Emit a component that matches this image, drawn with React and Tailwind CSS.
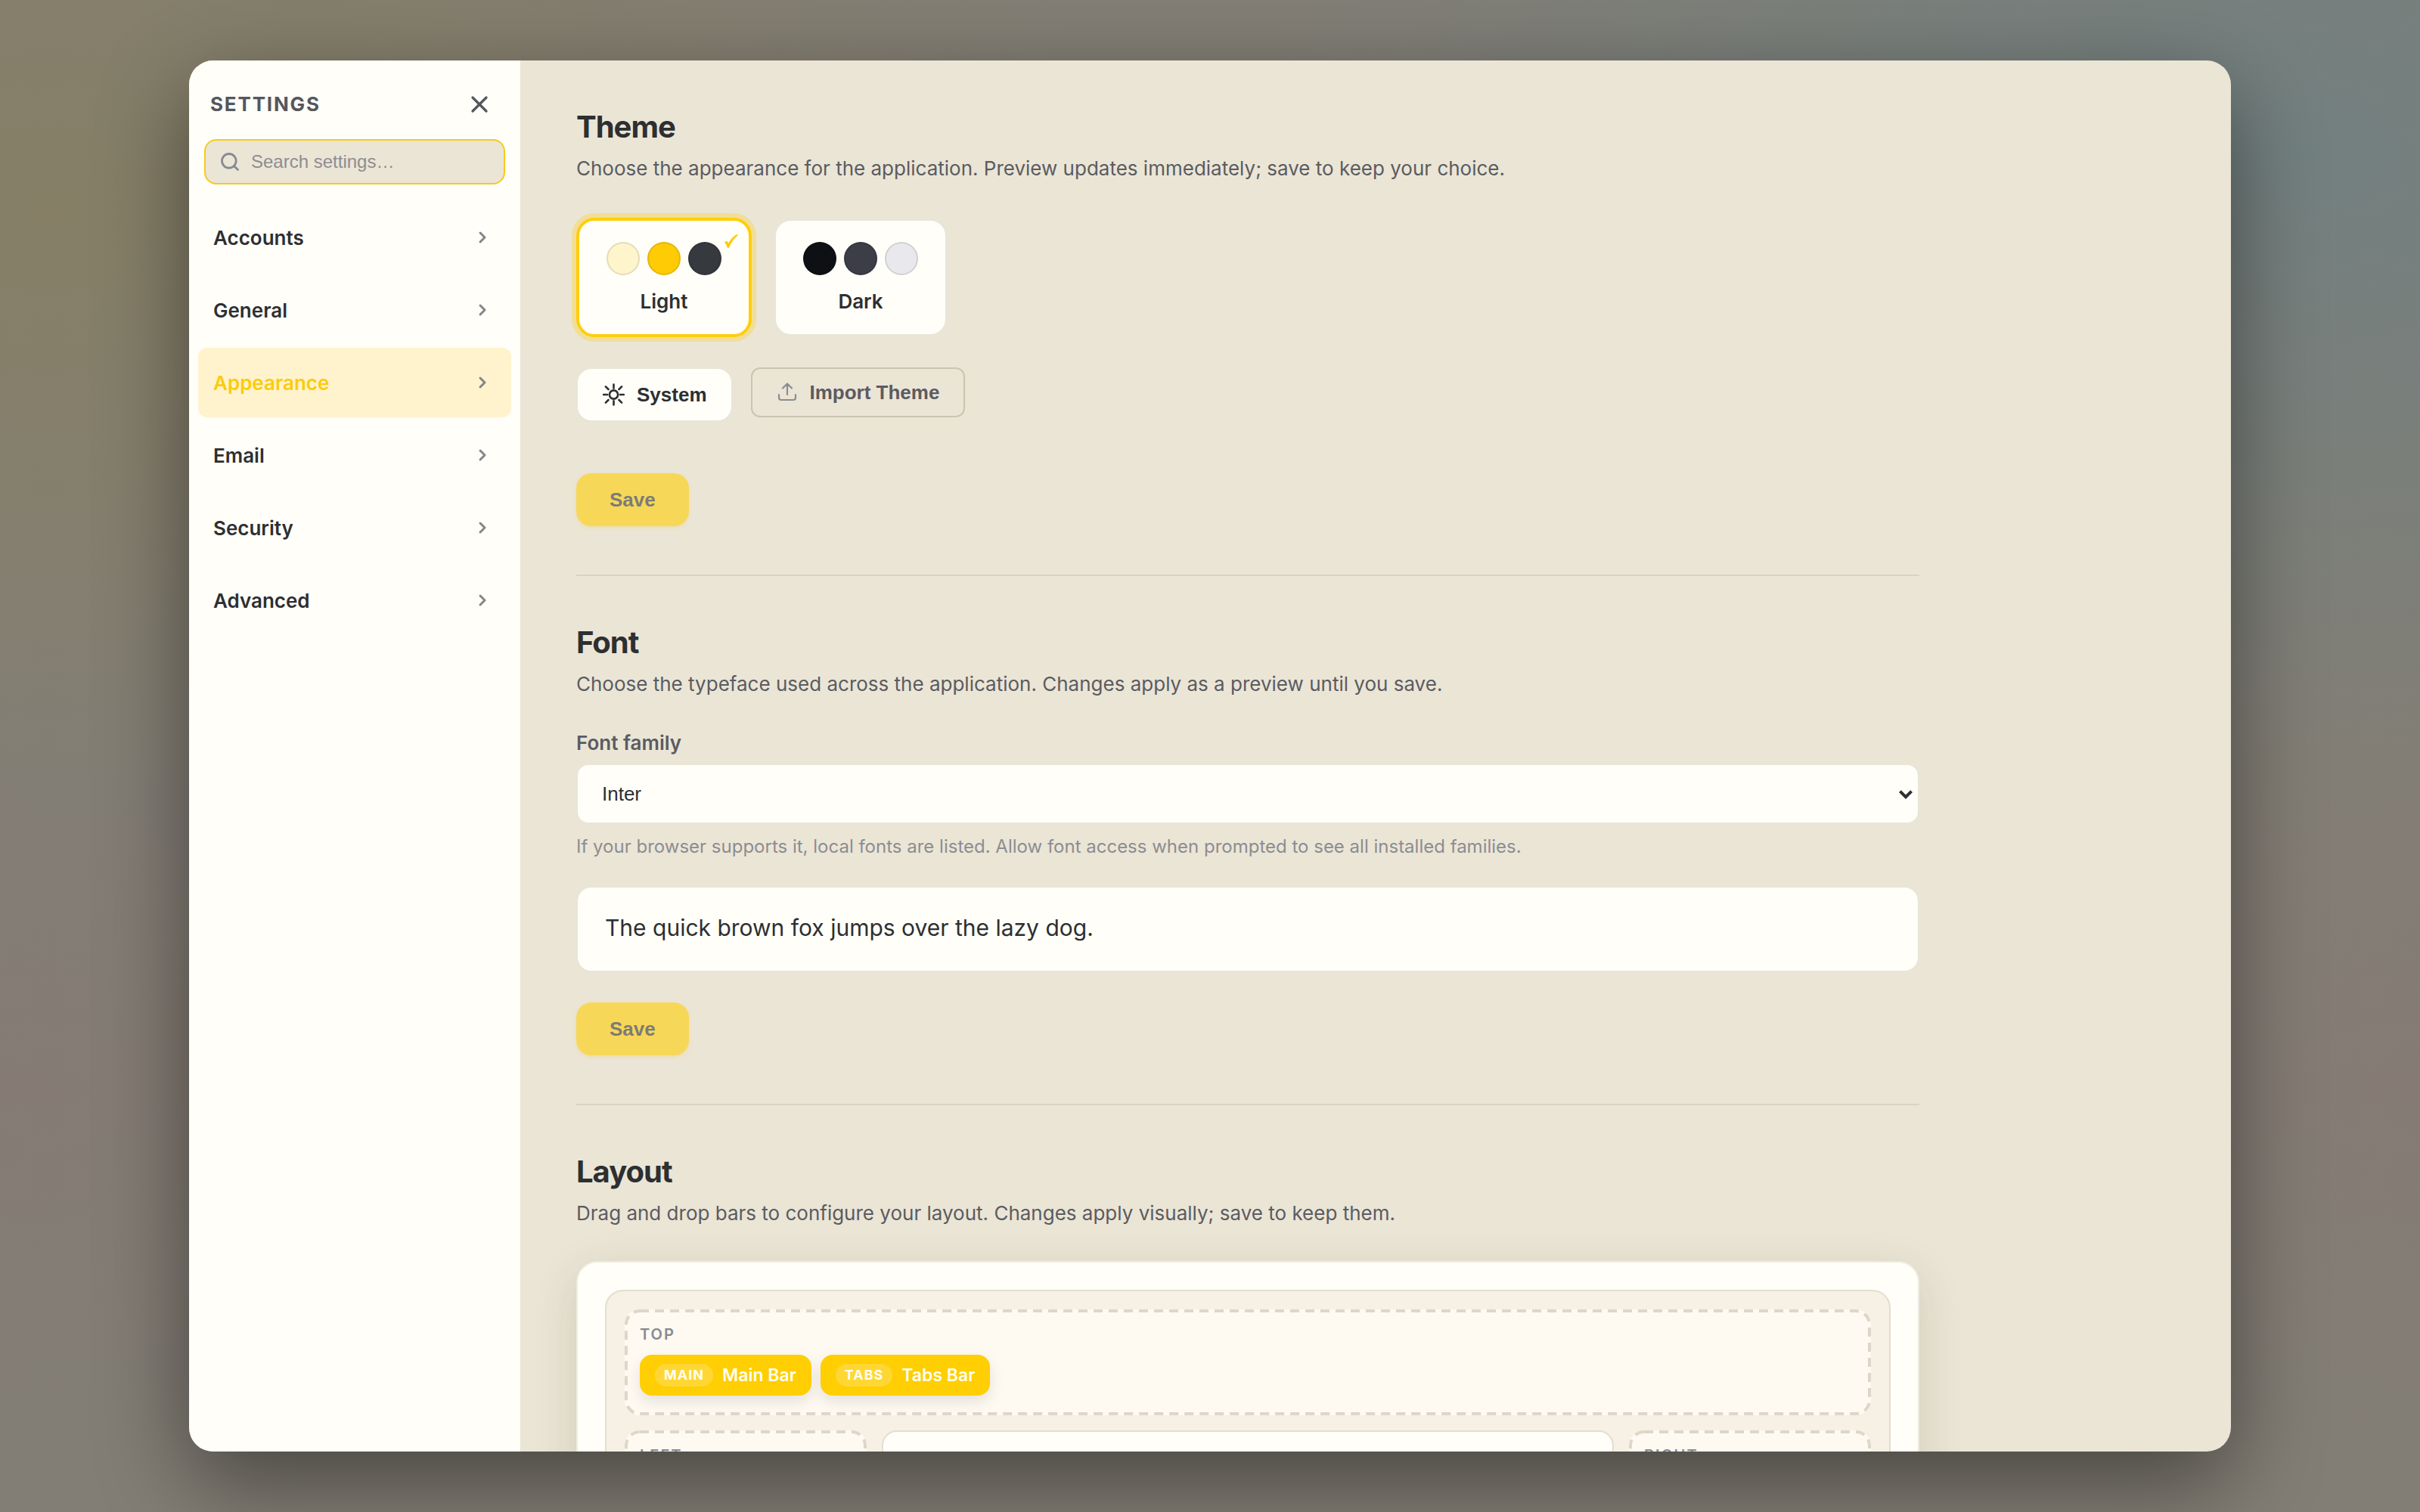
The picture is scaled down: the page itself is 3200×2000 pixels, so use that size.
import { useState } from 'react';
import { ChevronRight, Search, X } from 'lucide-react';

const navItems = ['Accounts', 'General', 'Appearance', 'Email', 'Security', 'Advanced'];

const themes = [
  { id: 'light', label: 'Light', swatches: ['bg-[#fff5cc]', 'bg-[#ffcb05]', 'bg-[#363a3f]'] },
  { id: 'dark', label: 'Dark', swatches: ['bg-[#0f1014]', 'bg-[#3d3d47]', 'bg-[#e9e9ed]'] },
];

const topBars = [
  { tag: 'MAIN', label: 'Main Bar' },
  { tag: 'TABS', label: 'Tabs Bar' },
];

const App = () => {
  const [active, setActive] = useState('Appearance');
  const [theme, setTheme] = useState('light');
  const [query, setQuery] = useState('');

  return (
    <div className="h-screen flex items-center justify-center px-20 bg-[#827e75] bg-[radial-gradient(ellipse_at_2%_14%,#867f66_0%,transparent_32%),radial-gradient(ellipse_at_95%_10%,#738080_0%,transparent_32%),radial-gradient(ellipse_at_100%_72%,#857b74_0%,transparent_22%),radial-gradient(ellipse_at_0%_72%,#857b74_0%,transparent_22%)] font-['Inter',sans-serif] text-[#2d2f31]">
      <div role="dialog" aria-label="Settings" className="w-full max-w-[2700px] h-[92vh] flex rounded-4xl overflow-hidden bg-[#ebe5d6] shadow-[0_40px_120px_rgba(0,0,0,0.45)]">
        <aside className="w-[440px] shrink-0 bg-[#fffef9] border-r-2 border-[#e8e4d5]">
          <div className="flex items-center justify-between pl-7 pr-[34px] pt-9 pb-6">
            <h1 className="text-[26px] leading-[44px] font-bold tracking-[0.07em] text-[#55575d]">SETTINGS</h1>
            <button aria-label="Close settings" className="p-0.5 text-[#55575d]"><X className="w-9 h-9" strokeWidth={2.2} /></button>
          </div>
          <label className="flex items-center gap-3.5 h-[60px] mx-5 px-[18px] rounded-2xl border-2 border-[#f5cb1d] bg-[#ebe5d6]">
            <Search className="w-7 h-7 text-[#868a91]" strokeWidth={2.4} />
            <input
              type="text"
              aria-label="Search settings"
              value={query}
              onChange={e => setQuery(e.target.value)}
              placeholder="Search settings…"
              className="min-w-0 flex-1 bg-transparent outline-none font-['Liberation_Sans',sans-serif] text-2xl placeholder:text-[#8b8d93]"
            />
          </label>
          <nav className="flex flex-col gap-1 px-3 pt-6">
            {navItems.map(item => (
              <button
                key={item}
                onClick={() => setActive(item)}
                className={`flex items-center justify-between h-[92px] pl-5 pr-[26px] rounded-xl text-[26px] font-semibold ${item === active ? 'bg-[#fff3cd] text-[#fccb0b]' : ''}`}
              >
                {item}
                <ChevronRight className="w-6 h-6 text-[#868686]" strokeWidth={3} />
              </button>
            ))}
          </nav>
        </aside>

        <main className="flex-1 min-w-0 overflow-y-auto [scrollbar-width:none]">
          <div className="max-w-[1920px] px-[72px]">
            <Section title="Theme" description="Choose the appearance for the application. Preview updates immediately; save to keep your choice.">
              <div className="flex gap-7 mt-11">
                {themes.map(t => (
                  <button
                    key={t.id}
                    onClick={() => setTheme(t.id)}
                    aria-pressed={t.id === theme}
                    className={`relative flex flex-col items-center gap-5 px-9 py-7 rounded-3xl border-4 bg-[#fffef9] ${t.id === theme ? 'border-[#ffce0a] shadow-[0_0_0_6px_rgba(255,206,10,0.3)]' : 'border-[#e9e5d7]'}`}
                  >
                    <span className="flex gap-2.5">
                      {t.swatches.map(s => <span key={s} className={`w-11 h-11 rounded-full border-2 border-black/10 ${s}`} />)}
                    </span>
                    <span className="text-[26px] leading-[30px] font-semibold">{t.label}</span>
                    {t.id === theme && <Tick />}
                  </button>
                ))}
              </div>
              <div className="flex items-start gap-6 mt-10 font-['Liberation_Sans',sans-serif]">
                <button className="flex items-center gap-4 h-[72px] px-8 rounded-[20px] border-2 border-[#e9e5d7] bg-[#fffef9] text-[26px] font-bold">
                  <SunIcon />
                  System
                </button>
                <button className="flex items-center gap-4 h-[66px] px-8 rounded-xl border-2 border-[#cbc4b1] text-[26px] font-bold text-[#5c5b61]">
                  <UploadIcon />
                  Import Theme
                </button>
              </div>
              <div className="mt-[68px]"><SaveButton /></div>
            </Section>

            <Section title="Font" description="Choose the typeface used across the application. Changes apply as a preview until you save.">
              <label htmlFor="font-family" className="block mt-10 mb-2.5 text-[26px] leading-[34px] font-semibold text-[#5a5c61]">Font family</label>
              <div className="relative">
                <select id="font-family" className="block w-full h-20 px-8 appearance-none rounded-2xl border-2 border-[#e9e5d7] bg-[#fffef9] font-['Liberation_Sans',sans-serif] text-[26px]">
                  <option>Inter</option>
                </select>
                <svg viewBox="0 0 18 12" className="absolute right-[9px] top-[35px] w-[18px] h-3 pointer-events-none" fill="none" stroke="#2d2f31" strokeWidth="4">
                  <path d="M1.4 1.6 9 9.2l7.6-7.6" />
                </svg>
              </div>
              <p className="mt-2.5 text-2xl leading-10 text-[#8b8d91]">If your browser supports it, local fonts are listed. Allow font access when prompted to see all installed families.</p>
              <div className="mt-8 px-9 pt-[31px] pb-[34px] rounded-[20px] border-2 border-[#e9e5d7] bg-[#fffef9] text-[30px] leading-[45px]">
                The quick brown fox jumps over the lazy dog.
              </div>
              <div className="mt-10"><SaveButton /></div>
            </Section>

            <Section title="Layout" description="Drag and drop bars to configure your layout. Changes apply visually; save to keep them." last>
              <div className="mt-[42px] p-9 rounded-[28px] border-2 border-[#efebdf] bg-[#fffef9] shadow-[0_16px_60px_rgba(60,50,10,0.14)]">
                <div className="flex flex-col gap-5 p-6 rounded-3xl border-2 border-[#e3dece] bg-[#f7f0e4]">
                  <DropZone label="TOP">
                    <div className="flex gap-3 mt-3.5">
                      {topBars.map(b => (
                        <div key={b.tag} draggable className="flex items-center gap-3 h-[54px] px-5 rounded-2xl bg-[#ffce03] text-[#fffef0] shadow-[0_8px_20px_rgba(0,0,0,0.1)]">
                          <span className="px-3 rounded-full bg-white/20 text-lg leading-[30px] font-bold tracking-[1px]">{b.tag}</span>
                          <span className="text-[23px] font-semibold">{b.label}</span>
                        </div>
                      ))}
                    </div>
                  </DropZone>
                  <div className="grid grid-cols-[320px_1fr_320px] gap-5">
                    <DropZone label="LEFT" />
                    <div className="rounded-[20px] border-2 border-[#e3dece] bg-[#fffef9]" />
                    <DropZone label="RIGHT" />
                  </div>
                </div>
              </div>
            </Section>
          </div>
        </main>
      </div>
    </div>
  );
};

const Section = ({ title, description, last, children }) => (
  <section className={`py-16 ${last ? '' : 'border-b-2 border-[#d9d3c2]'}`}>
    <h2 className="text-[40px] leading-[48px] font-bold tracking-[-1px]">{title}</h2>
    <p className="mt-2.5 text-[26px] leading-[42px] text-[#5a5c61]">{description}</p>
    {children}
  </section>
);

const SaveButton = () => (
  <button disabled className="block h-[70px] px-11 rounded-[20px] bg-[#ffce03] font-['Liberation_Sans',sans-serif] text-[26px] font-bold text-[#34363a] opacity-60 shadow-[0_2px_4px_rgba(255,206,3,0.4)]">Save</button>
);

const DropZone = ({ label, children }) => (
  <div className="relative min-h-[140px] p-5 rounded-[20px] bg-[#fefaf2]">
    <svg className="absolute inset-0 w-full h-full pointer-events-none" fill="none">
      <rect x="2" y="2" rx="18" className="w-[calc(100%-4px)] h-[calc(100%-4px)]" stroke="#ddd7c8" strokeWidth="4" strokeDasharray="12 8" />
    </svg>
    <div className="text-xl leading-[26px] font-semibold tracking-[2px] text-[#868a92]">{label}</div>
    {children}
  </div>
);

const Tick = () => (
  <svg viewBox="0 0 18 18" className="absolute top-[18px] right-3.5 w-[18px] h-[18px]" fill="#fccb0b" stroke="#fccb0b" strokeWidth=".8">
    <path d="M.4 10.6 2.8 9c1.2 1 1.9 2.1 2.4 3.6C7.6 7.4 11.200 3.2 16.2.4L17.6.9C12.4 5.2 8.4 10.8 5.6 17.6H4.2C3.4 15 2.2 12.600.4 10.6Z" />
  </svg>
);

const SunIcon = () => (
  <svg viewBox="0 0 30 30" className="w-[30px] h-[30px]" fill="none" stroke="currentColor" strokeWidth="2.6" strokeLinecap="round">
    <circle cx="15.5" cy="15" r="5.6" />
    <path d="M15.5 1.6v5M15.5 23.4v5M2.1 15h5M23.9 15h5M4.9 4.4l3.6 3.6M22.5 22l3.6 3.6M26.1 4.4l-3.6 3.6M8.5 22l-3.6 3.6" />
  </svg>
);

const UploadIcon = () => (
  <svg viewBox="0 0 28 28" className="w-7 h-7" fill="none" stroke="#8b8c93" strokeWidth="2.2" strokeLinecap="round" strokeLinejoin="round">
    <path d="M14 17V2.5M8 8.5l6-6 6 6M3 17v4a3 3 0 0 0 3 3h16a3 3 0 0 0 3-3v-4" />
  </svg>
);

export default App;
